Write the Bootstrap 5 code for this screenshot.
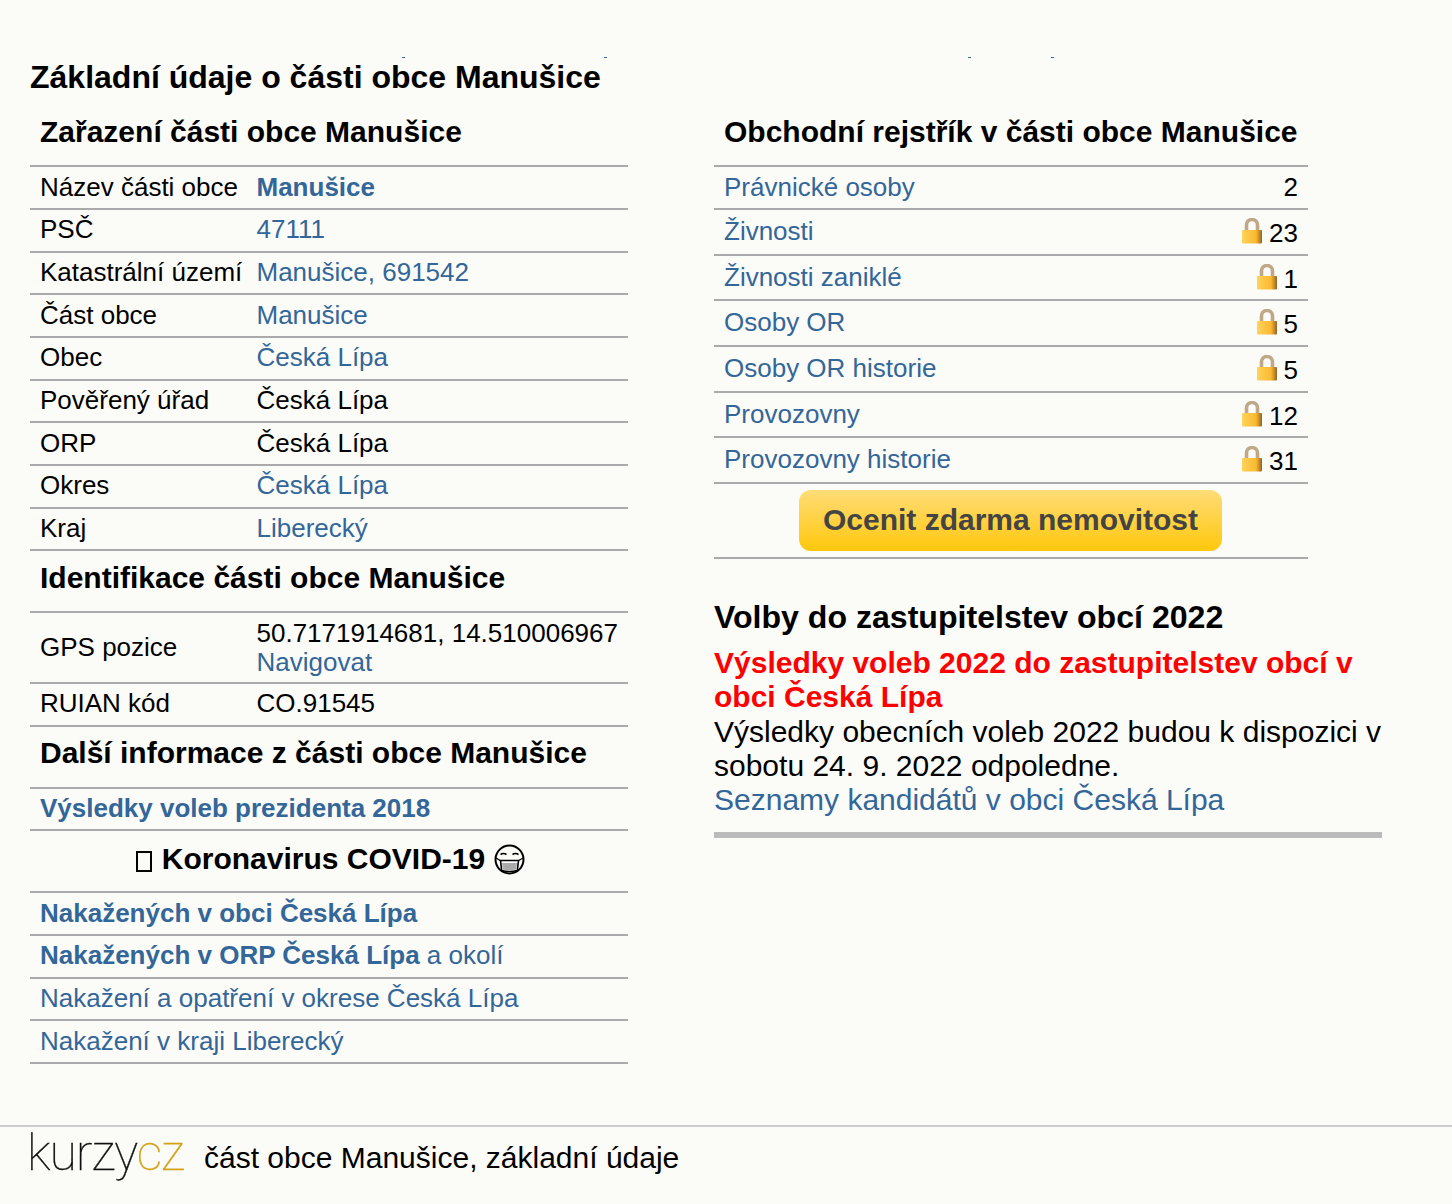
<!DOCTYPE html>
<html lang="cs"><head><meta charset="utf-8"><title>Manušice</title>
<link href="https://cdn.jsdelivr.net/npm/bootstrap@5.3.0/dist/css/bootstrap.min.css" rel="stylesheet">
<style>
html,body{height:1204px;overflow:hidden}
body{background:#fbfbf7;color:#000;font-family:"Liberation Sans",Arial,sans-serif;font-size:26px;line-height:normal}
a{color:#369;text-decoration:none}
.strip{height:1px;margin-top:57px;padding-left:402px;gap:0}
.strip i{display:block;width:3px;height:1px;background:#369}
.strip i:nth-child(2){margin-left:199px}.strip i:nth-child(3){margin-left:361px}.strip i:nth-child(4){margin-left:80px}
.ttl{font-size:32px;font-weight:700;line-height:37px;margin:0 0 0 30px;padding-top:1px}
.cols{padding-left:30px;height:1029px;align-items:flex-start}
.lcol{width:598px;margin-right:86px}
.rcol{width:668px}
.tb{--bs-table-bg:transparent;--bs-table-color:#000;margin:0;table-layout:fixed;border-collapse:separate;border-spacing:0;line-height:29.67px}
.tb td{padding:5.5px 10px;border:0;border-bottom:2px solid #aaa;box-shadow:none;vertical-align:middle;background:transparent;color:#000;white-space:nowrap}
.tb tr.hd td{font-size:30px;font-weight:700;line-height:34.5px;padding:9.75px 10px 15.75px}
.tb tr.hd.first td{padding:18.75px 10px 16px}
.tb td.gps{line-height:28.8px}
.wl{width:216.5px}
.wr{width:594px}
.lk{width:22px;height:26px;vertical-align:top;margin:-1px 6px 0 0}
.tb td.num{text-align:right;width:120px}
.tb td.lock{padding-top:9px;padding-bottom:5px}
.btn-val{background:linear-gradient(#ffdc78,#ffc80c);color:#444;font-weight:700;font-size:30px;line-height:34px;border:0;border-radius:12px;width:423px;height:61px;padding:0 0 2px;margin-right:1px}
.btn-val:hover{background:linear-gradient(#ffdc78,#ffc80c);color:#444}
.tb td.bc{padding:6.5px 10px 6px}
.vh{font-size:32.1px;font-weight:700;margin:40px 0 9.5px;line-height:37px}
.vt{font-size:30px;line-height:34.3px}
.vt b{color:#f00;display:block}
.vbar{height:6px;background:#bbb;margin-top:14.5px}
.tb tr.hd td.cov{padding:10.75px 10px 14.75px 12px}
.box{display:inline-block;width:16px;height:21px;border:2px solid #000;vertical-align:-3px;margin:0 1px 0 1px}
.mask{width:31px;height:31px;vertical-align:-6px;margin-top:-5px}
.ft{border-top:2px solid #ccc;height:78px;padding:0 0 15px 30px}
.logo{font-family:Roboto,sans-serif;font-weight:100;font-size:50px;line-height:46px;width:158px;margin:-9px 19px 0 -3px;padding-right:3px;letter-spacing:-1.1px;white-space:nowrap;color:#111;-webkit-text-stroke:.3px #111}
.logo span{color:#d4a017;-webkit-text-stroke:.3px #d4a017}
.ftx{font-size:30px}
</style></head>
<body>
<div class="strip d-flex"><i></i><i></i><i></i><i></i></div>
<h1 class="ttl">Základní údaje o části obce Manušice</h1>
<div class="cols d-flex">
<div class="lcol">
<table class="table tb"><colgroup><col class="wl"><col></colgroup><tbody>
<tr class="hd first"><td colspan="2">Zařazení části obce Manušice</td></tr>
<tr><td>Název části obce</td><td><a href="#"><b>Manušice</b></a></td></tr>
<tr><td>PSČ</td><td><a href="#">47111</a></td></tr>
<tr><td>Katastrální území</td><td><a href="#">Manušice, 691542</a></td></tr>
<tr><td>Část obce</td><td><a href="#">Manušice</a></td></tr>
<tr><td>Obec</td><td><a href="#">Česká Lípa</a></td></tr>
<tr><td>Pověřený úřad</td><td>Česká Lípa</td></tr>
<tr><td>ORP</td><td>Česká Lípa</td></tr>
<tr><td>Okres</td><td><a href="#">Česká Lípa</a></td></tr>
<tr><td>Kraj</td><td><a href="#">Liberecký</a></td></tr>
<tr class="hd"><td colspan="2">Identifikace části obce Manušice</td></tr>
<tr><td>GPS pozice</td><td class="gps">50.7171914681, 14.510006967<br><a href="#">Navigovat</a></td></tr>
<tr><td>RUIAN kód</td><td>CO.91545</td></tr>
<tr class="hd"><td colspan="2">Další informace z části obce Manušice</td></tr>
<tr><td colspan="2"><a href="#"><b>Výsledky voleb prezidenta 2018</b></a></td></tr>
<tr class="hd"><td colspan="2" class="text-center cov"><span class="box"></span> Koronavirus COVID-19 <svg class="mask" viewBox="0 0 31 31" fill="none" stroke="#000"><circle cx="15.500" cy="15.500" r="14" stroke-width="2"/><path d="M6.500 10.500q3-2 6 0M18.500 10.500q3-2 6 0" stroke-width="1.600"/><path d="M6.500 16.500h18l-1.200 10q-7.800 2-15.600 0z" fill="#fff" stroke-width="1.600"/><path d="M8 19h15l-.8 6.500q-6.700 1.500-13.400 0z" fill="#aaa" stroke="none"/><path d="M2 14l5 3M29 14l-5 3" stroke-width="1.200"/></svg></td></tr>
<tr><td colspan="2"><a href="#"><b>Nakažených v obci Česká Lípa</b></a></td></tr>
<tr><td colspan="2"><a href="#"><b>Nakažených v ORP Česká Lípa</b> a okolí</a></td></tr>
<tr><td colspan="2"><a href="#">Nakažení a opatření v okrese Česká Lípa</a></td></tr>
<tr><td colspan="2"><a href="#">Nakažení v kraji Liberecký</a></td></tr>
</tbody></table>
</div>
<div class="rcol">
<svg width="0" height="0" class="position-absolute"><defs>
<linearGradient id="lg" x1="0" x2="1" y1="0" y2="0"><stop offset="0" stop-color="#ffd35c"/><stop offset=".7" stop-color="#fbb92e"/><stop offset=".85" stop-color="#c98f2a"/><stop offset="1" stop-color="#8f6428"/></linearGradient>
<symbol id="lock" viewBox="0 0 22 26"><path d="M5.500 13V7a5.500 5.500 0 0 1 11 0V13" fill="none" stroke="#bfa888" stroke-width="3.600"/><rect x="1" y="12" width="20" height="13.500" rx="1" fill="url(#lg)"/></symbol>
</defs></svg>
<table class="table tb wr"><colgroup><col><col></colgroup><tbody>
<tr class="hd first"><td colspan="2">Obchodní rejstřík v části obce Manušice</td></tr>
<tr><td><a href="#">Právnické osoby</a></td><td class="num">2</td></tr>
<tr><td><a href="#">Živnosti</a></td><td class="num lock"><svg class="lk"><use href="#lock"/></svg>23</td></tr>
<tr><td><a href="#">Živnosti zaniklé</a></td><td class="num lock"><svg class="lk"><use href="#lock"/></svg>1</td></tr>
<tr><td><a href="#">Osoby OR</a></td><td class="num lock"><svg class="lk"><use href="#lock"/></svg>5</td></tr>
<tr><td><a href="#">Osoby OR historie</a></td><td class="num lock"><svg class="lk"><use href="#lock"/></svg>5</td></tr>
<tr><td><a href="#">Provozovny</a></td><td class="num lock"><svg class="lk"><use href="#lock"/></svg>12</td></tr>
<tr><td><a href="#">Provozovny historie</a></td><td class="num lock"><svg class="lk"><use href="#lock"/></svg>31</td></tr>
<tr><td colspan="2" class="bc text-center"><a class="btn btn-val d-inline-flex align-items-center justify-content-center" href="#">Ocenit zdarma nemovitost</a></td></tr>
</tbody></table>
<h2 class="vh">Volby do zastupitelstev obcí 2022</h2>
<div class="vt"><b>Výsledky voleb 2022 do zastupitelstev obcí v obci Česká Lípa</b>Výsledky obecních voleb 2022 budou k dispozici v sobotu 24. 9. 2022 odpoledne.<br><a href="#">Seznamy kandidátů v obci Česká Lípa</a></div>
<div class="vbar"></div>
</div>
</div>
<footer class="ft d-flex align-items-center">
<div class="logo">kurzy<span>cz</span></div>
<div class="ftx">část obce Manušice, základní údaje</div>
</footer>
</body></html>
